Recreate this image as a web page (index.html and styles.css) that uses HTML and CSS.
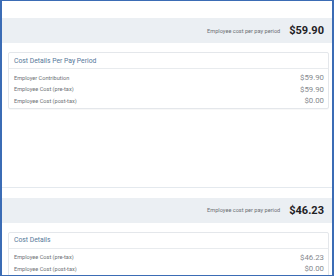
FILE: index.html
```html
<!DOCTYPE html>
<html>
<head>
<meta charset="utf-8">
<link rel="stylesheet" href="styles.css">
</head>
<body>
<div class="frame">
  <section class="plan plan-first">
    <div class="band">
      <span class="band-label">Employee cost per pay period</span>
      <span class="band-price">$59.90</span>
    </div>
    <div class="card">
      <div class="card-head">Cost Details Per Pay Period</div>
      <div class="card-body">
        <div class="row"><span class="row-label">Employer Contribution</span><span class="row-value">$59.90</span></div>
        <div class="row"><span class="row-label">Employee Cost (pre-tax)</span><span class="row-value">$59.90</span></div>
        <div class="row"><span class="row-label">Employee Cost (post-tax)</span><span class="row-value">$0.00</span></div>
      </div>
    </div>
  </section>
  <section class="plan plan-second">
    <div class="band">
      <span class="band-label">Employee cost per pay period</span>
      <span class="band-price">$46.23</span>
    </div>
    <div class="card">
      <div class="card-head">Cost Details</div>
      <div class="card-body">
        <div class="row"><span class="row-label">Employee Cost (pre-tax)</span><span class="row-value">$46.23</span></div>
        <div class="row"><span class="row-label">Employee Cost (post-tax)</span><span class="row-value">$0.00</span></div>
      </div>
    </div>
  </section>
</div>
</body>
</html>
```
FILE: styles.css
```css
html, body {
  margin: 0;
  padding: 0;
  background: #ffffff;
}
body {
  font-family: Roboto, "Liberation Sans", sans-serif;
}
.frame {
  width: 334px;
  height: 276px;
  box-sizing: border-box;
  border: 1px solid #3b6cb5;
  border-left-width: 2px;
  border-right-width: 2px;
  overflow: hidden;
  background: #ffffff;
}
.plan-first {
  padding-top: 17px;
  padding-bottom: 78px;
}
.plan-second {
  border-top: 1px solid #e4e9ee;
  padding-top: 10px;
}
.band {
  height: 25px;
  background: #ebeff3;
  display: flex;
  align-items: center;
  justify-content: flex-end;
  padding-right: 8px;
  gap: 9px;
}
.band-label {
  font-size: 5.6px;
  color: #6b6f74;
}
.band-price {
  font-size: 11px;
  font-weight: 700;
  color: #1e2124;
}
.card {
  margin: 9px 3px 0 6px;
  border: 1px solid #e4e7eb;
  border-radius: 2px;
  box-shadow: 0 1px 1px rgba(0,0,0,0.03);
  background: #ffffff;
}
.card-head {
  height: 15px;
  display: flex;
  align-items: center;
  padding-left: 5px;
  font-size: 6.8px;
  color: #56789a;
  border-bottom: 1px solid #e8ebee;
}
.card-body {
  padding: 3px 4px 1px 5px;
}
.row {
  height: 11.5px;
  display: flex;
  align-items: center;
  justify-content: space-between;
}
.row-label {
  font-size: 5.6px;
  color: #6d7176;
}
.row-value {
  font-size: 7.8px;
  color: #85898e;
}
```
